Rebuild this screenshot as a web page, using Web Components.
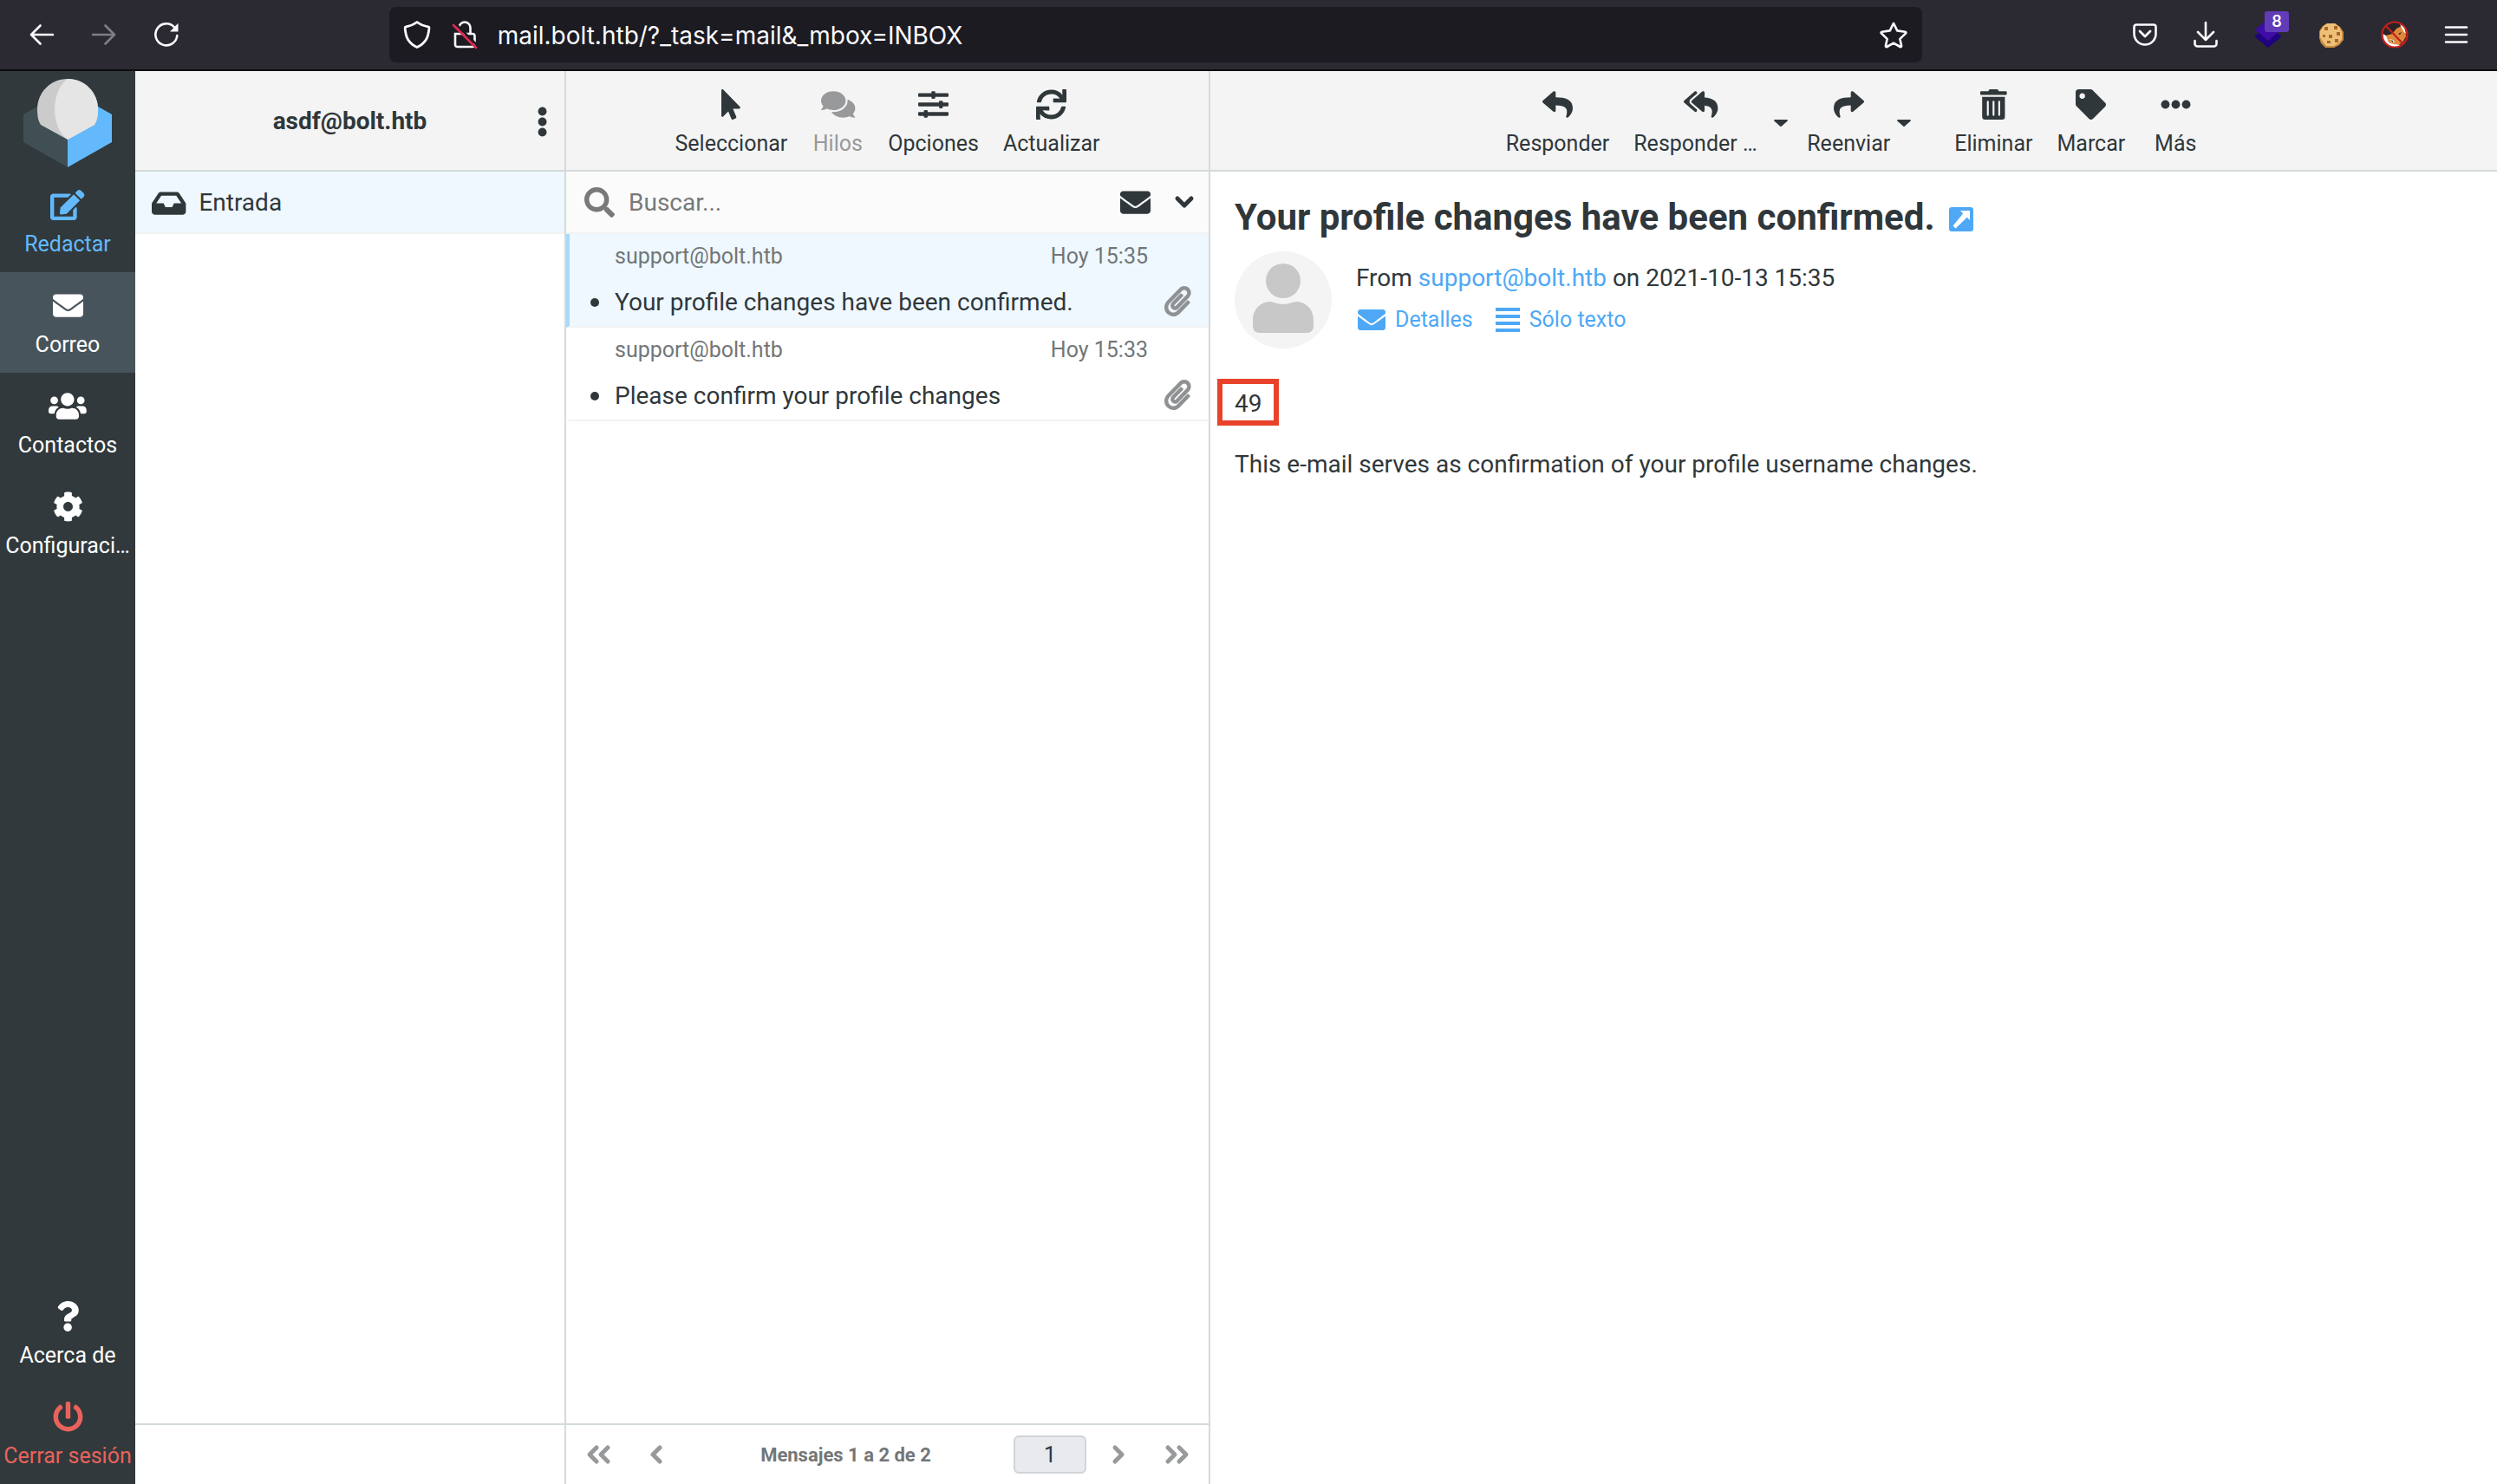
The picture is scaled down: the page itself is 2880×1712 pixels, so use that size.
<!DOCTYPE html>
<html lang="es">
<head>
<meta charset="utf-8">
<title>Correo :: Entrada</title>
<style>
  html, body { margin: 0; height: 100%; }
  body {
    --ink: #30373a;
    --muted: #737677;
    --link: #4ea8f5;
    --line: #d4dadc;
    --soft-line: #f0f3f4;
    --bar: #f4f4f4;
    --selected: #eff8fe;
    font-family: Roboto, "Liberation Sans", sans-serif;
    font-size: 28px;
    line-height: 36px;
    color: var(--ink);
    background: #fff;
  }
</style>
</head>
<body>
<mail-app></mail-app>

<script>
const ICONS = {
  edit: ['0 0 576 512', '<path d="M402.6 83.2l90.2 90.2c3.8 3.8 3.8 10 0 13.8L274.4 405.6l-92.8 10.3c-12.4 1.4-22.9-9.1-21.5-21.5l10.3-92.8L388.8 83.2c3.8-3.8 10-3.8 13.8 0zm162-22.9l-48.8-48.8c-15.2-15.2-39.9-15.2-55.2 0l-35.4 35.4c-3.8 3.8-3.8 10 0 13.8l90.2 90.2c3.8 3.8 10 3.8 13.8 0l35.4-35.4c15.2-15.3 15.2-40 0-55.2zM384 346.2V448H64V128h229.8c3.2 0 6.2-1.3 8.5-3.5l40-40c7.6-7.6 2.2-20.5-8.5-20.5H48C21.5 64 0 85.5 0 112v352c0 26.5 21.5 48 48 48h352c26.5 0 48-21.5 48-48V306.2c0-10.7-12.9-16-20.5-8.5l-40 40c-2.2 2.3-3.5 5.3-3.5 8.5z"/>'],
  envelope: ['0 0 512 512', '<path d="M502.3 190.8c3.9-3.1 9.7-.2 9.7 4.7V400c0 26.5-21.5 48-48 48H48c-26.5 0-48-21.5-48-48V195.6c0-5 5.7-7.8 9.7-4.7 22.4 17.4 52.1 39.5 154.1 113.6 21.1 15.4 56.7 47.8 92.2 47.6 35.7.3 72-32.8 92.3-47.6 102-74.1 131.6-96.3 154-113.7zM256 320c23.2.4 56.6-29.2 73.4-41.4 132.7-96.3 142.8-104.7 173.4-128.7 5.8-4.5 9.2-11.5 9.2-18.9v-19c0-26.5-21.5-48-48-48H48c-26.5 0-48 21.5-48 48v19c0 7.4 3.4 14.3 9.2 18.9 30.6 23.9 40.7 32.4 173.4 128.7 16.8 12.2 50.2 41.8 73.4 41.4z"/>'],
  users: ['0 0 640 512', '<path d="M96 224c35.3 0 64-28.7 64-64s-28.7-64-64-64-64 28.7-64 64 28.7 64 64 64zm448 0c35.3 0 64-28.7 64-64s-28.7-64-64-64-64 28.7-64 64 28.7 64 64 64zm32 32h-64c-17.6 0-33.5 7.1-45.1 18.6 40.3 22.1 68.9 62 75.1 109.4h66c17.7 0 32-14.3 32-32v-32c0-35.3-28.7-64-64-64zm-256 0c61.9 0 112-50.1 112-112S381.9 32 320 32 208 82.1 208 144s50.1 112 112 112zm76.8 32h-8.3c-20.8 10-43.9 16-68.5 16s-47.6-6-68.5-16h-8.3C179.6 288 128 339.6 128 403.2V432c0 26.5 21.5 48 48 48h288c26.5 0 48-21.5 48-48v-28.8c0-63.6-51.6-115.2-115.2-115.2zm-223.7-13.4C161.5 263.1 145.6 256 128 256H64c-35.3 0-64 28.7-64 64v32c0 17.7 14.3 32 32 32h65.9c6.3-47.4 34.9-87.3 75.2-109.4z"/>'],
  cog: ['0 0 512 512', '<path d="M487.4 315.7l-42.6-24.6c4.3-23.2 4.3-47 0-70.2l42.6-24.6c4.9-2.8 7.1-8.6 5.5-14-11.1-35.6-30-67.8-54.7-94.6-3.8-4.1-10-5.1-14.8-2.3L380.8 110c-17.9-15.4-38.5-27.3-60.8-35.1V25.8c0-5.6-3.9-10.5-9.4-11.7-36.7-8.2-74.3-7.8-109.2 0-5.5 1.2-9.4 6.1-9.4 11.7V75c-22.2 7.9-42.8 19.8-60.8 35.1L88.7 85.5c-4.9-2.8-11-1.9-14.8 2.3-24.7 26.7-43.6 58.9-54.7 94.6-1.7 5.4.6 11.2 5.5 14L67.3 221c-4.3 23.2-4.3 47 0 70.2l-42.6 24.6c-4.9 2.8-7.1 8.6-5.5 14 11.1 35.6 30 67.8 54.7 94.6 3.8 4.1 10 5.1 14.8 2.3l42.6-24.6c17.9 15.4 38.5 27.3 60.8 35.1v49.2c0 5.6 3.9 10.5 9.4 11.7 36.7 8.2 74.3 7.8 109.2 0 5.5-1.2 9.4-6.1 9.4-11.7v-49.2c22.2-7.9 42.8-19.8 60.8-35.1l42.6 24.6c4.9 2.8 11 1.9 14.8-2.3 24.7-26.7 43.6-58.9 54.7-94.6 1.5-5.5-.7-11.3-5.6-14.1zM256 336c-44.1 0-80-35.9-80-80s35.9-80 80-80 80 35.9 80 80-35.9 80-80 80z"/>'],
  power: ['0 0 512 512', '<path d="M400 54.1c63 45 104 118.6 104 201.9 0 136.8-110.8 247.7-247.5 248C120 504.3 8.2 393 8 256.4 7.9 173.1 48.9 99.3 111.8 54.2c11.7-8.3 28-4.8 35 7.7L162.6 90c5.9 10.5 3.1 23.8-6.6 31-41.5 30.8-68 79.6-68 134.9-.1 92.3 74.5 168.1 168 168.1 91.6 0 168.6-74.2 168-169.1-.3-51.8-24.7-101.8-68.1-134-9.7-7.2-12.4-20.5-6.5-30.9l15.8-28.1c7-12.4 23.2-16.1 34.8-7.8zM296 264V24c0-13.3-10.7-24-24-24h-32c-13.3 0-24 10.7-24 24v240c0 13.3 10.7 24 24 24h32c13.3 0 24-10.7 24-24z"/>'],
  question: ['0 0 384 512', '<path d="M202.021 0C122.202 0 70.503 32.703 29.914 91.026c-7.363 10.58-5.093 25.086 5.178 32.874l43.138 32.709c10.373 7.865 25.132 6.026 33.253-4.148 25.049-31.381 43.63-49.449 82.757-49.449 30.764 0 68.816 19.799 68.816 49.631 0 22.552-18.617 34.134-48.993 51.164-35.423 19.86-82.299 44.576-82.299 106.405V320c0 13.255 10.745 24 24 24h72.471c13.255 0 24-10.745 24-24v-5.773c0-42.86 125.268-44.645 125.268-160.627C377.504 66.256 286.902 0 202.021 0zM192 373.459c-38.196 0-69.271 31.075-69.271 69.271 0 38.195 31.075 69.27 69.271 69.27s69.271-31.075 69.271-69.271-31.075-69.27-69.271-69.27z"/>'],
  inbox: ['0 0 576 512', '<path d="M567.938 243.908L462.25 85.374A48.003 48.003 0 0 0 422.311 64H153.689a48 48 0 0 0-39.938 21.374L8.062 243.908A47.994 47.994 0 0 0 0 270.533V400c0 26.51 21.49 48 48 48h480c26.51 0 48-21.49 48-48V270.533a47.994 47.994 0 0 0-8.062-26.625zM162.252 128h251.497l85.333 128H376l-32 64H232l-32-64H76.918l85.334-128z"/>'],
  kebab: ['0 0 192 512', '<path d="M96 184c39.8 0 72 32.2 72 72s-32.2 72-72 72-72-32.2-72-72 32.2-72 72-72zM24 80c0 39.8 32.2 72 72 72s72-32.2 72-72S135.8 8 96 8 24 40.2 24 80zm0 352c0 39.8 32.2 72 72 72s72-32.2 72-72-32.2-72-72-72-72 32.2-72 72z"/>'],
  dots: ['0 0 512 512', '<circle cx="80" cy="256" r="72"/><circle cx="256" cy="256" r="72"/><circle cx="432" cy="256" r="72"/>'],
  pointer: ['0 0 320 512', '<path d="M302.189 329.126H196.105l55.831 135.993c3.889 9.428-.555 19.999-9.444 23.999l-49.165 21.427c-9.165 4-19.443-.571-23.332-9.714l-53.053-129.136-86.664 89.138C18.729 472.71 0 463.554 0 447.977V18.299C0 1.899 19.921-6.096 30.277 5.443l284.412 292.542c11.472 11.179 3.007 31.141-12.5 31.141z"/>'],
  comments: ['0 0 576 512', '<path d="M416 192c0-88.4-93.1-160-208-160S0 103.6 0 192c0 34.3 14.1 65.9 38 92-13.4 30.2-35.5 54.2-35.8 54.5-2.2 2.3-2.8 5.7-1.5 8.7S4.8 352 8 352c36.6 0 66.9-12.3 88.7-25 32.2 15.7 70.3 25 111.3 25 114.9 0 208-71.6 208-160zm122 220c23.9-26 38-57.7 38-92 0-66.9-53.5-124.2-129.3-148.1.9 6.6 1.3 13.3 1.3 20.1 0 105.9-107.7 192-240 192-10.8 0-21.3-.8-31.7-1.9C207.8 439.6 281.8 480 368 480c41 0 79.1-9.2 111.3-25 21.8 12.7 52.1 25 88.7 25 3.2 0 6.1-1.9 7.3-4.8 1.3-2.9.7-6.3-1.5-8.7-.3-.3-22.4-24.2-35.8-54.5z"/>'],
  sliders: ['0 0 512 512', '<rect y="64" width="512" height="64" rx="16"/><rect x="224" y="32" width="64" height="128" rx="16"/><rect y="224" width="512" height="64" rx="16"/><rect x="352" y="192" width="64" height="128" rx="16"/><rect y="384" width="512" height="64" rx="16"/><rect x="96" y="352" width="64" height="128" rx="16"/>'],
  sync: ['0 0 512 512', '<path d="M440.65 12.57l4 82.77A247.16 247.16 0 0 0 255.83 8C134.73 8 33.91 94.92 12.29 209.82A12 12 0 0 0 24.09 224h49.05a12 12 0 0 0 11.67-9.26 175.91 175.91 0 0 1 317-56.94l-101.46-4.86a12 12 0 0 0-12.57 12v47.41a12 12 0 0 0 12 12H500a12 12 0 0 0 12-12V12a12 12 0 0 0-12-12h-47.37a12 12 0 0 0-11.98 12.57zM255.83 432a175.61 175.61 0 0 1-146-77.8l101.8 4.87a12 12 0 0 0 12.57-12v-47.4a12 12 0 0 0-12-12H12a12 12 0 0 0-12 12V500a12 12 0 0 0 12 12h47.35a12 12 0 0 0 12-12.6l-4.15-82.57A247.17 247.17 0 0 0 255.83 504c121.11 0 221.93-86.92 243.55-201.82a12 12 0 0 0-11.8-14.18h-49.05a12 12 0 0 0-11.67 9.26A175.86 175.86 0 0 1 255.83 432z"/>'],
  search: ['0 0 512 512', '<path d="M505 442.7L405.3 343c-4.5-4.5-10.6-7-17-7H372c27.6-35.3 44-79.7 44-128C416 93.1 322.9 0 208 0S0 93.1 0 208s93.1 208 208 208c48.3 0 92.7-16.4 128-44v16.3c0 6.4 2.5 12.5 7 17l99.7 99.7c9.4 9.4 24.6 9.4 33.9 0l28.3-28.3c9.4-9.4 9.4-24.6.1-34zM208 336c-70.7 0-128-57.2-128-128 0-70.7 57.2-128 128-128 70.7 0 128 57.2 128 128 0 70.7-57.2 128-128 128z"/>'],
  clip: ['0 0 448 512', '<path d="M43.246 466.142c-58.43-60.289-57.341-157.511 1.386-217.581L254.392 34c44.316-45.332 116.351-45.336 160.671 0 43.89 44.894 43.943 117.329 0 162.276L232.214 383.128c-29.855 30.537-78.633 30.111-107.982-.998-28.275-29.97-27.368-77.473 1.452-106.953l143.743-146.835c6.182-6.314 16.312-6.422 22.626-.241l22.861 22.379c6.315 6.182 6.422 16.312.241 22.626L171.427 319.927c-4.932 5.045-5.236 13.428-.648 18.292 4.372 4.634 11.245 4.711 15.688.165l182.849-186.851c19.613-20.062 19.613-52.725-.011-72.798-19.189-19.627-49.957-19.637-69.154 0L90.39 293.295c-34.763 35.56-35.299 93.12-1.191 128.313 34.01 35.093 88.985 35.137 123.058.286l172.06-175.999c6.177-6.319 16.307-6.433 22.626-.256l22.877 22.364c6.319 6.177 6.434 16.307.256 22.626l-172.06 175.998c-59.576 60.938-155.943 60.216-214.77-.485z"/>'],
  reply: ['0 0 512 512', '<path d="M8.309 189.836L184.313 37.851C199.719 24.546 224 35.347 224 56.015v80.053c160.629 1.839 288 34.032 288 186.258 0 61.441-39.581 122.309-83.333 154.132-13.653 9.931-33.111-2.533-28.077-18.631 45.344-145.012-21.507-183.51-176.59-185.742V360c0 20.7-24.3 31.453-39.687 18.164l-176.004-152c-11.071-9.562-11.086-26.753 0-36.328z"/>'],
  forward: ['0 0 512 512', '<path transform="matrix(-1 0 0 1 512 0)" d="M8.309 189.836L184.313 37.851C199.719 24.546 224 35.347 224 56.015v80.053c160.629 1.839 288 34.032 288 186.258 0 61.441-39.581 122.309-83.333 154.132-13.653 9.931-33.111-2.533-28.077-18.631 45.344-145.012-21.507-183.51-176.59-185.742V360c0 20.7-24.3 31.453-39.687 18.164l-176.004-152c-11.071-9.562-11.086-26.753 0-36.328z"/>'],
  replyall: ['0 0 576 512', '<path d="M136.309 189.836L312.313 37.851C327.72 24.546 352 35.348 352 56.015v82.763c129.182 10.231 224 52.212 224 183.548 0 61.441-39.582 122.309-83.333 154.132-13.653 9.931-33.111-2.533-28.077-18.631 38.512-123.162-3.922-169.482-112.59-182.015v84.175c0 20.701-24.3 31.453-39.687 18.164L136.309 226.164c-11.071-9.561-11.086-26.753 0-36.328zm-128 36.328L184.313 378.15C199.7 391.439 224 380.687 224 359.986v-15.818l-108.606-93.785A55.96 55.96 0 0 1 96 207.998a55.953 55.953 0 0 1 19.393-42.38L224 71.832V56.015c0-20.667-24.28-31.469-39.687-18.164L8.309 189.836c-11.086 9.575-11.071 26.767 0 36.328z"/>'],
  trash: ['0 0 448 512', '<path d="M32 464a48 48 0 0 0 48 48h288a48 48 0 0 0 48-48V128H32zm272-256a16 16 0 0 1 32 0v224a16 16 0 0 1-32 0zm-96 0a16 16 0 0 1 32 0v224a16 16 0 0 1-32 0zm-96 0a16 16 0 0 1 32 0v224a16 16 0 0 1-32 0zM432 32H312l-9.4-18.7A24 24 0 0 0 281.1 0H166.8a23.72 23.72 0 0 0-21.4 13.3L136 32H16A16 16 0 0 0 0 48v32a16 16 0 0 0 16 16h416a16 16 0 0 0 16-16V48a16 16 0 0 0-16-16z"/>'],
  tag: ['0 0 512 512', '<path d="M0 252.118V48C0 21.49 21.49 0 48 0h204.118a48 48 0 0 1 33.941 14.059l211.882 211.882c18.745 18.745 18.745 49.137 0 67.882L293.823 497.941c-18.745 18.745-49.137 18.745-67.882 0L14.059 286.059A48 48 0 0 1 0 252.118zM112 64c-26.51 0-48 21.49-48 48s21.49 48 48 48 48-21.49 48-48-21.49-48-48-48z"/>'],
  caret: ['0 0 16 8', '<path d="M1 0h14c.9 0 1.300 1 .7 1.600L8.700 7.700c-.4.4-1 .4-1.400 0L.3 1.600C-.3 1 .1 0 1 0z"/>'],
  down: ['0 0 22 14', '<path d="M3 3l8 8 8-8" fill="none" stroke="currentColor" stroke-width="5" stroke-linecap="round" stroke-linejoin="round"/>'],
  first: ['0 0 28 22', '<path d="M12 3L4 11l8 8M25 3l-8 8 8 8" fill="none" stroke="currentColor" stroke-width="5" stroke-linecap="round" stroke-linejoin="round"/>'],
  prev: ['0 0 15 22', '<path d="M12 3L4 11l8 8" fill="none" stroke="currentColor" stroke-width="5" stroke-linecap="round" stroke-linejoin="round"/>'],
  next: ['0 0 15 22', '<path d="M3 3l8 8-8 8" fill="none" stroke="currentColor" stroke-width="5" stroke-linecap="round" stroke-linejoin="round"/>'],
  last: ['0 0 28 22', '<path d="M3 3l8 8-8 8M16 3l8 8-8 8" fill="none" stroke="currentColor" stroke-width="5" stroke-linecap="round" stroke-linejoin="round"/>'],
  external: ['0 0 28 28', '<rect width="28" height="28" rx="3"/><path d="M13 4h11v11l-3.200-3.200L7.500 24.500l-3-3L16.200 7.200z" fill="#fff"/>'],
  lines: ['0 0 28 28', '<path d="M0 0h28v4H0zM0 8h28v4H0zM0 16h28v4H0zM0 24h28v4H0z"/>'],
  avatar: ['0 0 112 112', '<circle cx="56" cy="56" r="56" fill="#f4f4f4"/><circle cx="56" cy="34" r="20" fill="#c8c8c8"/><path d="M21 86V79c0-12 9-21 20-21 4 0 8 3 15 3s11-3 15-3c11 0 20 9 20 21v7c0 5-3 8-8 8H29c-5 0-8-3-8-8z" fill="#c8c8c8"/>'],
  logo: ['0 0 102 102', '<path d="M0 41L51 12v90L0 73z" fill="#404f54"/><path d="M102 41L51 12v90l51-29z" fill="#63b9fc"/><path d="M51 0C31 0 16 16 16 35c0 8 1 13 4 18l31 17 31-17c3-5 4-10 4-18C86 16 71 0 51 0z" fill="#cbcbcb"/><path d="M51 0c-9 6-15 20-15 35 0 14 5 28 15 35l31-17c3-5 4-10 4-18C86 16 71 0 51 0z" fill="#e5e5e5"/>'],
  back: ['0 0 28 24', '<path d="M27 12H2M12.500 1.500L2 12l10.500 10.500" fill="none" stroke="currentColor" stroke-width="2.600" stroke-linecap="round" stroke-linejoin="round"/>'],
  ahead: ['0 0 28 24', '<path d="M1 12h25M15.500 1.500L26 12 15.500 22.500" fill="none" stroke="currentColor" stroke-width="2.600" stroke-linecap="round" stroke-linejoin="round"/>'],
  reload: ['0 0 28 28', '<path d="M26.300 15A12.500 12.500 0 1 1 23 5.300" fill="none" stroke="currentColor" stroke-width="2.600" stroke-linecap="round"/><path d="M27.500 .8v9.700H18z"/>'],
  shield: ['0 0 30 32', '<path d="M15 1.500c4 3 8 4.600 13 5.300 1 0 1 1 .9 2C28 19 25 26 15 30.500 5 26 2 19 1.200 8.800c0-1 0-2 .9-2C7 6 11 4.500 15 1.500z" fill="none" stroke="currentColor" stroke-width="2.800" stroke-linejoin="round"/>'],
  lock: ['0 0 28 32', '<path d="M7.500 9V8a6.500 6.500 0 0 1 13 0v7M3 15h20a2.500 2.500 0 0 1 2.500 2.500v10A2.500 2.500 0 0 1 23 30H5.500A2.500 2.500 0 0 1 3 27.500z" fill="none" stroke="currentColor" stroke-width="2.600"/><path d="M2 2l26 26" stroke="#1c1b22" stroke-width="3"/><path d="M1 5l26 26" stroke="#e22850" stroke-width="2.600" stroke-linecap="round"/>'],
  star: ['0 0 32 30', '<path d="M16 1.800l4.200 8.600 9.300 1.300c.9.100 1.200 1 .6 1.700l-6.700 6.500 1.700 8c.1 1-.6 1.600-1.500 1.100L16 24.700 8.400 29c-.9.500-1.600-.1-1.500-1.100l1.700-8-6.700-6.500c-.6-.7-.3-1.600.6-1.700l9.300-1.300z" fill="none" stroke="currentColor" stroke-width="2.600" stroke-linejoin="round"/>'],
  pocket: ['0 0 28 26', '<path d="M4 1.500h20a2.500 2.500 0 0 1 2.500 2.500v8a12.500 12.500 0 0 1-25 0V4A2.500 2.500 0 0 1 4 1.500z" fill="none" stroke="currentColor" stroke-width="2.600"/><path d="M8 9l6 6 6-6" fill="none" stroke="currentColor" stroke-width="2.800" stroke-linecap="round" stroke-linejoin="round"/>'],
  download: ['0 0 28 30', '<path d="M14 1v20M5 12l9 9 9-9M1.500 22v3.500A3 3 0 0 0 4.500 28.500h19a3 3 0 0 0 3-3V22" fill="none" stroke="currentColor" stroke-width="2.600" stroke-linecap="round" stroke-linejoin="round"/>'],
  layers: ['0 0 32 30', '<path d="M16 5l16 12-16 13L0 17z" fill="#20037c"/><path d="M16 -3l15 12.500L16 22 1 9.500z" fill="#3f0ca6"/>'],
  cookie: ['0 0 30 30', '<path d="M10 2h9l6 4 4 6v9l-5 6-6 3H8l-5-5-2-6V11l4-6z" fill="#c98b3c"/><path d="M10 2h9l5 4 3 6v8l-4 5-5 3H9l-4-5-3-5v-7l4-6z" fill="#edc078"/><g fill="#a8662c"><path d="M7 6h4v4H7zM18 5h4v4h-4zM12 15h4v4h-4zM21 12h4v4h-4zM5 15h3v3H5zM10 22h4v3h-4zM19 20h4v4h-4z"/></g>'],
  fox: ['0 0 32 32', '<circle cx="16" cy="16" r="14" fill="#2a2326"/><path d="M6 17l7-2 5-6 6-3 4 5 1 7-4 7-6 4-8 1-4-4z" fill="#e0893a"/><path d="M22 4l5 3 2 8-3-3zM2 15l4 2 3 8 6 2 8 1-5 3-8-1-6-5z" fill="#fff"/><path d="M10 21l4 1 2 3-4-1z" fill="#fff"/><path d="M11 22l3 1v2zM20 15l4-2-2 3z" fill="#222"/><circle cx="16" cy="16" r="14.500" fill="none" stroke="#c2201f" stroke-width="2.200"/><path d="M6 6l20 21" stroke="#c2201f" stroke-width="2.200"/>'],
  menu: ['0 0 26 20', '<path d="M1 1.500h24M1 10h24M1 18.500h24" stroke="currentColor" stroke-width="2.600" stroke-linecap="round"/>']
};

const RESET = `
  *, *::before { box-sizing: border-box; }
  button { margin: 0; padding: 0; border: 0; background: none; color: inherit; font: inherit; cursor: pointer; }
  a { color: inherit; text-decoration: none; }
`;

function define(name, render) {
  customElements.define(name, class extends HTMLElement {
    connectedCallback() {
      if (this.shadowRoot) return;
      this.attachShadow({ mode: 'open' }).innerHTML = render(this);
    }
  });
}

define('mail-icon', el => {
  const [box, shape] = ICONS[el.getAttribute('name')];
  const size = el.getAttribute('size') || 35;
  return `<style>
    :host { display: inline-flex; flex: none; }
    svg { display: block; height: ${size}px; width: auto; fill: currentColor; overflow: visible; }
  </style><svg viewBox="${box}" aria-hidden="true">${shape}</svg>`;
});

define('browser-bar', () => `<style>${RESET}
    :host { display: flex; align-items: center; height: 82px; padding: 0 34px; border-bottom: 2px solid #0c0c0d; box-sizing: border-box;
      background: #2b2a33; color: #fbfbfe; font-family: Inter, "Liberation Sans", sans-serif; }
    button { display: flex; }
    nav { display: flex; align-items: center; gap: 44px; padding-right: 16px; }
    .off { opacity: .4; }
    .spring { flex: 23; }
    .address { flex: 176; display: flex; align-items: center; gap: 26px; height: 64px; padding: 0 17px; border-radius: 8px; background: #1c1b22; }
    input { flex: 1; min-width: 0; height: 40px; margin: 0 0 0 -2px; padding: 2px 0 0; border: 0; outline: 0; background: none; color: inherit; font: inherit; }
    .tools { gap: 42px; padding: 0 0 0 16px; }
    .badged { position: relative; }
    .badge { position: absolute; left: 12px; top: -12px; width: 28px; height: 24px; border-radius: 3px; background: #623cb8; color: #fff;
      font-size: 18px; font-weight: 600; line-height: 24px; text-align: center; }
  </style>
  <nav>
    <button aria-label="Atrás"><mail-icon name="back" size="24"></mail-icon></button>
    <button aria-label="Adelante" class="off"><mail-icon name="ahead" size="24"></mail-icon></button>
    <button aria-label="Recargar"><mail-icon name="reload" size="28"></mail-icon></button>
  </nav>
  <div class="spring"></div>
  <div class="address">
    <mail-icon name="shield" size="32"></mail-icon>
    <mail-icon name="lock" size="32"></mail-icon>
    <input type="text" aria-label="Dirección" value="mail.bolt.htb/?_task=mail&amp;_mbox=INBOX">
    <button aria-label="Marcador"><mail-icon name="star" size="30"></mail-icon></button>
  </div>
  <div class="spring"></div>
  <nav class="tools">
    <button aria-label="Pocket"><mail-icon name="pocket" size="26"></mail-icon></button>
    <button aria-label="Descargas"><mail-icon name="download" size="30"></mail-icon></button>
    <button aria-label="Extensión" class="badged"><mail-icon name="layers" size="30"></mail-icon><span class="badge">8</span></button>
    <button aria-label="Cookies"><mail-icon name="cookie" size="30"></mail-icon></button>
    <button aria-label="Proxy"><mail-icon name="fox" size="32"></mail-icon></button>
    <button aria-label="Menú"><mail-icon name="menu" size="20"></mail-icon></button>
  </nav>`);

define('task-item', el => `<style>${RESET}
    :host { display: block; color: #fff; font-size: 25px; line-height: 30px; }
    :host([active]) { background: #48545b; }
    :host([tone="compose"]) { color: #63b9fb; }
    :host([tone="logout"]) { color: #e9635c; }
    a { display: flex; flex-direction: column; align-items: center; gap: 13px; padding: 21px 0 17px; white-space: nowrap; }
  </style><a href="#"><mail-icon name="${el.getAttribute('icon')}"></mail-icon><span><slot></slot></span></a>`);

define('task-menu', () => `<style>
    :host { display: flex; flex-direction: column; width: 156px; flex: none; background: #31393c; }
    .logo { display: flex; justify-content: center; height: 116px; padding-top: 9px; box-sizing: border-box; }
    .end { margin-top: auto; }
  </style>
  <div class="logo"><mail-icon name="logo" size="102"></mail-icon></div>
  <task-item icon="edit" tone="compose">Redactar</task-item>
  <task-item icon="envelope" active>Correo</task-item>
  <task-item icon="users">Contactos</task-item>
  <task-item icon="cog">Configuraci…</task-item>
  <task-item icon="question" class="end">Acerca de</task-item>
  <task-item icon="power" tone="logout">Cerrar sesión</task-item>`);

define('folder-pane', () => `<style>${RESET}
    :host { display: flex; flex-direction: column; width: 497px; flex: none; border-right: 2px solid var(--line); box-sizing: border-box; }
    header { display: grid; grid-template-columns: 1fr auto 1fr; align-items: center; height: 116px; padding: 2px 19px 0;
      border-bottom: 2px solid var(--line); background: var(--bar); }
    h2 { grid-column: 2; margin: 0; font-size: 28px; font-weight: 700; }
    header button { display: flex; justify-self: end; }
    .folder { display: flex; align-items: center; gap: 15px; height: 72px; padding: 2px 19px 0; border-bottom: 2px solid var(--soft-line); background: var(--selected); }
    footer { height: 70px; margin-top: auto; border-top: 2px solid var(--line); }
  </style>
  <header><h2>asdf@bolt.htb</h2><button aria-label="Acciones de carpeta"><mail-icon name="kebab"></mail-icon></button></header>
  <a class="folder" href="#"><mail-icon name="inbox"></mail-icon>Entrada</a>
  <footer></footer>`);

define('tool-button', el => `<style>${RESET}
    :host { display: flex; font-size: 25px; line-height: 30px; }
    :host([disabled]) { color: #97999b; }
    .main { display: flex; flex-direction: column; align-items: center; gap: 13px; min-width: 88px; padding: 0 14px; white-space: nowrap; }
    :host([menu]) .main { padding-right: 0; }
    :host([wide]) .main { width: 168px; }
    :host([wide]) .label { align-self: flex-start; }
    .caret { display: flex; align-items: center; justify-content: center; width: 32px; }
  </style>
  <button class="main" ${el.hasAttribute('disabled') ? 'disabled' : ''}><mail-icon name="${el.getAttribute('icon')}"></mail-icon><span class="label"><slot></slot></span></button>
  ${el.hasAttribute('menu') ? '<button class="caret" aria-label="Más opciones"><mail-icon name="caret" size="8"></mail-icon></button>' : ''}`);

define('tool-bar', () => `<style>
    :host { display: flex; justify-content: center; align-items: flex-start; height: 116px; padding-top: 21px; box-sizing: border-box;
      border-bottom: 2px solid var(--line); background: var(--bar); flex: none; }
    ::slotted([spaced]) { margin-right: 28px; }
  </style><slot></slot>`);

define('search-bar', () => `<style>${RESET}
    :host { display: flex; align-items: center; height: 72px; padding: 0 17px 0 21px; box-sizing: border-box; border-bottom: 2px solid var(--soft-line); background: #fbfbfb; flex: none; }
    label { display: flex; margin-right: 16px; color: #77797a; }
    input { flex: 1; min-width: 0; height: 40px; padding: 0; border: 0; outline: 0; background: none; color: inherit; font: inherit; }
    input::placeholder { color: #77797a; opacity: 1; }
    button { display: flex; margin-left: 28px; }
  </style>
  <label for="q"><mail-icon name="search"></mail-icon></label>
  <input id="q" type="text" aria-label="Buscar" placeholder="Buscar...">
  <button aria-label="Filtro"><mail-icon name="envelope"></mail-icon></button>
  <button aria-label="Opciones de búsqueda"><mail-icon name="down" size="14"></mail-icon></button>`);

define('message-row', el => `<style>${RESET}
    :host { display: grid; grid-template-columns: 10px 1fr 50px; column-gap: 18px; padding: 11px 20px 9px 24px;
      border-left: 4px solid transparent; border-bottom: 2px solid var(--soft-line); box-sizing: border-box; }
    :host([selected]) { border-left-color: #a8daf8; background: var(--selected); }
    .meta { grid-column: 2 / 4; display: flex; justify-content: space-between; margin-right: 50px; margin-bottom: 20px;
      color: var(--muted); font-size: 25px; line-height: 30px; }
    .dot { align-self: center; width: 10px; height: 10px; border-radius: 50%; background: var(--ink); }
    .subject { white-space: nowrap; }
    .clip { display: flex; justify-content: flex-end; align-items: center; height: 32px; color: #8f9293; }
  </style>
  <div class="meta"><span>${el.getAttribute('from')}</span><span>${el.getAttribute('date')}</span></div>
  <span class="dot"></span>
  <a class="subject" href="#"><slot></slot></a>
  <span class="clip"><mail-icon name="clip"></mail-icon></span>`);

define('list-pager', () => `<style>${RESET}
    :host { display: flex; align-items: center; height: 70px; padding: 0 3px; margin-top: auto; box-sizing: border-box; border-top: 2px solid var(--line); color: #97999b; }
    button { display: flex; justify-content: center; width: 67px; }
    .count { flex: 1; padding-top: 2px; text-align: center; color: var(--muted); font-size: 22px; font-weight: 700; }
    input { width: 84px; height: 44px; margin: 0 4px 0 8px; padding: 0; border: 2px solid #d0d4d8; border-radius: 6px; background: #e8eaee;
      color: var(--ink); font: inherit; font-size: 25px; text-align: center; }
  </style>
  <button aria-label="Primera página"><mail-icon name="first" size="22"></mail-icon></button>
  <button aria-label="Página anterior"><mail-icon name="prev" size="22"></mail-icon></button>
  <span class="count">Mensajes 1 a 2 de 2</span>
  <input type="text" aria-label="Página" value="1">
  <button aria-label="Página siguiente"><mail-icon name="next" size="22"></mail-icon></button>
  <button aria-label="Última página"><mail-icon name="last" size="22"></mail-icon></button>`);

define('list-pane', () => `<style>
    :host { display: flex; flex-direction: column; width: 743px; flex: none; border-right: 2px solid var(--line); box-sizing: border-box; }
  </style>
  <tool-bar>
    <tool-button icon="pointer">Seleccionar</tool-button>
    <tool-button icon="comments" disabled>Hilos</tool-button>
    <tool-button icon="sliders">Opciones</tool-button>
    <tool-button icon="sync">Actualizar</tool-button>
  </tool-bar>
  <search-bar></search-bar>
  <message-row from="support@bolt.htb" date="Hoy 15:35" selected>Your profile changes have been confirmed.</message-row>
  <message-row from="support@bolt.htb" date="Hoy 15:33">Please confirm your profile changes</message-row>
  <list-pager></list-pager>`);

define('message-view', () => `<style>${RESET}
    :host { display: block; flex: 1; min-width: 0; }
    article { padding: 28px; }
    h1 { display: flex; align-items: center; gap: 16px; margin: 0 0 14px; font-size: 42px; line-height: 50px; font-weight: 700; }
    h1 a { display: flex; padding-top: 4px; }
    a { color: var(--link); }
    .head { display: flex; gap: 28px; margin-bottom: 46px; }
    .info { padding-top: 13px; }
    .links { display: flex; gap: 26px; margin: 14px 0 0 2px; font-size: 25px; line-height: 30px; }
    .links a { display: flex; align-items: center; gap: 11px; }
    p { margin: 0 0 34px; }
    mark { position: relative; background: none; color: inherit; }
    mark::before { content: ""; position: absolute; inset: -12px -20px -9px; border: 6px solid #e8432a; }
  </style>
  <tool-bar>
    <tool-button icon="reply">Responder</tool-button>
    <tool-button icon="replyall" menu wide>Responder …</tool-button>
    <tool-button icon="forward" menu spaced>Reenviar</tool-button>
    <tool-button icon="trash">Eliminar</tool-button>
    <tool-button icon="tag">Marcar</tool-button>
    <tool-button icon="dots">Más</tool-button>
  </tool-bar>
  <article>
    <h1>Your profile changes have been confirmed. <a href="#" aria-label="Abrir en ventana nueva"><mail-icon name="external" size="28"></mail-icon></a></h1>
    <div class="head">
      <mail-icon name="avatar" size="112"></mail-icon>
      <div class="info">
        <div>From <a href="#">support@bolt.htb</a> on 2021-10-13 15:35</div>
        <div class="links">
          <a href="#"><mail-icon name="envelope" size="32"></mail-icon>Detalles</a>
          <a href="#"><mail-icon name="lines" size="28"></mail-icon>Sólo texto</a>
        </div>
      </div>
    </div>
    <p><mark>49</mark></p>
    <p>This e-mail serves as confirmation of your profile username changes.</p>
  </article>`);

define('mail-app', () => `<style>
    :host { display: flex; flex-direction: column; min-height: 100vh; }
    main { display: flex; flex: 1; }
  </style>
  <browser-bar></browser-bar>
  <main><task-menu></task-menu><folder-pane></folder-pane><list-pane></list-pane><message-view></message-view></main>`);
</script>
</body>
</html>
